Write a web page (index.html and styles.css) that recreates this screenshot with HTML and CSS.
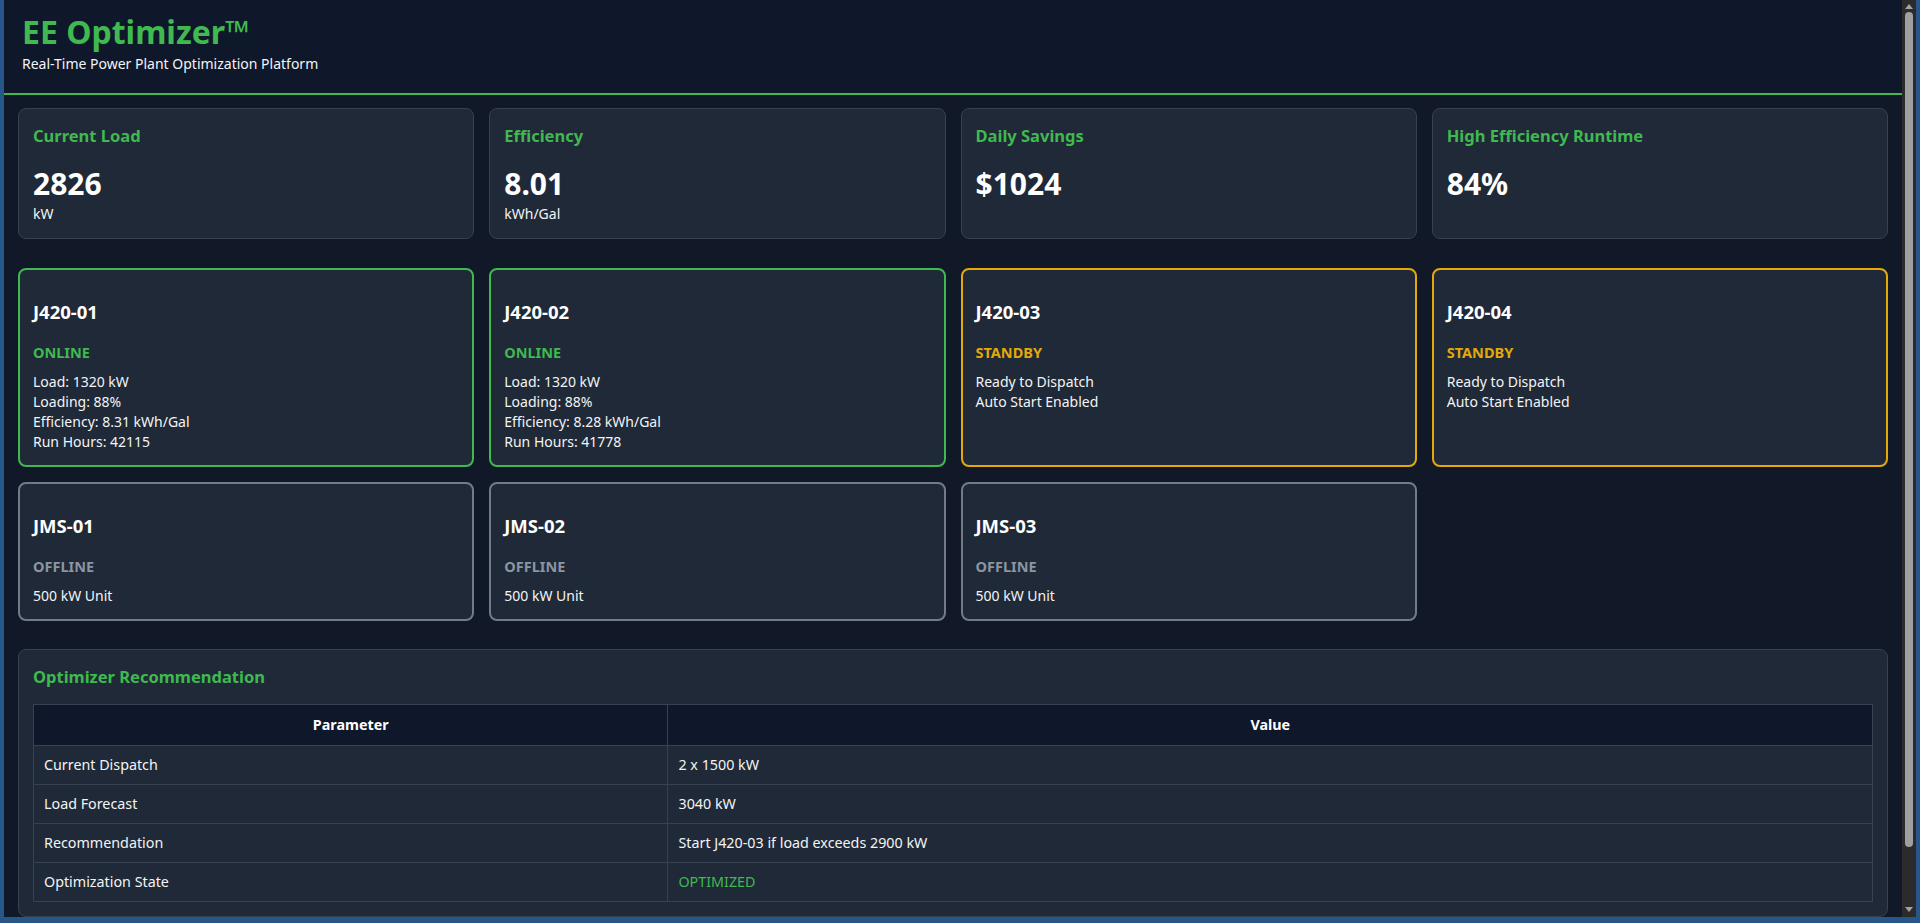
FILE: index.html
```html
<!DOCTYPE html>
<html lang="en">
<head>
<meta charset="utf-8">
<title>EE Optimizer</title>
<link rel="stylesheet" href="styles.css">
</head>
<body>
<div class="window">
  <div class="viewport">
    <header class="header">
      <h1 class="title">EE Optimizer™</h1>
      <p class="subtitle">Real-Time Power Plant Optimization Platform</p>
    </header>
    <main class="main">
      <section class="stats">
        <div class="stat-card">
          <h3 class="stat-label">Current Load</h3>
          <div class="stat-value">2826</div>
          <div class="stat-unit">kW</div>
        </div>
        <div class="stat-card">
          <h3 class="stat-label">Efficiency</h3>
          <div class="stat-value">8.01</div>
          <div class="stat-unit">kWh/Gal</div>
        </div>
        <div class="stat-card">
          <h3 class="stat-label">Daily Savings</h3>
          <div class="stat-value">$1024</div>
        </div>
        <div class="stat-card">
          <h3 class="stat-label">High Efficiency Runtime</h3>
          <div class="stat-value">84%</div>
        </div>
      </section>

      <section class="units">
        <div class="unit-card online">
          <h3 class="unit-name">J420-01</h3>
          <div class="unit-status">ONLINE</div>
          <div class="unit-line">Load: 1320 kW</div>
          <div class="unit-line">Loading: 88%</div>
          <div class="unit-line">Efficiency: 8.31 kWh/Gal</div>
          <div class="unit-line">Run Hours: 42115</div>
        </div>
        <div class="unit-card online">
          <h3 class="unit-name">J420-02</h3>
          <div class="unit-status">ONLINE</div>
          <div class="unit-line">Load: 1320 kW</div>
          <div class="unit-line">Loading: 88%</div>
          <div class="unit-line">Efficiency: 8.28 kWh/Gal</div>
          <div class="unit-line">Run Hours: 41778</div>
        </div>
        <div class="unit-card standby">
          <h3 class="unit-name">J420-03</h3>
          <div class="unit-status">STANDBY</div>
          <div class="unit-line">Ready to Dispatch</div>
          <div class="unit-line">Auto Start Enabled</div>
        </div>
        <div class="unit-card standby">
          <h3 class="unit-name">J420-04</h3>
          <div class="unit-status">STANDBY</div>
          <div class="unit-line">Ready to Dispatch</div>
          <div class="unit-line">Auto Start Enabled</div>
        </div>
        <div class="unit-card offline">
          <h3 class="unit-name">JMS-01</h3>
          <div class="unit-status">OFFLINE</div>
          <div class="unit-line">500 kW Unit</div>
        </div>
        <div class="unit-card offline">
          <h3 class="unit-name">JMS-02</h3>
          <div class="unit-status">OFFLINE</div>
          <div class="unit-line">500 kW Unit</div>
        </div>
        <div class="unit-card offline">
          <h3 class="unit-name">JMS-03</h3>
          <div class="unit-status">OFFLINE</div>
          <div class="unit-line">500 kW Unit</div>
        </div>
      </section>

      <section class="panel">
        <h2 class="panel-title">Optimizer Recommendation</h2>
        <table class="rec-table">
          <thead>
            <tr><th class="col-param">Parameter</th><th>Value</th></tr>
          </thead>
          <tbody>
            <tr><td>Current Dispatch</td><td>2 x 1500 kW</td></tr>
            <tr><td>Load Forecast</td><td>3040 kW</td></tr>
            <tr><td>Recommendation</td><td>Start J420-03 if load exceeds 2900 kW</td></tr>
            <tr><td>Optimization State</td><td class="ok">OPTIMIZED</td></tr>
          </tbody>
        </table>
      </section>
    </main>
  </div>
  <div class="scrollbar" aria-hidden="true">
    <span class="sb-arrow sb-up"></span>
    <div class="sb-track"><div class="sb-thumb"></div></div>
    <span class="sb-arrow sb-down"></span>
  </div>
</div>
</body>
</html>
```

FILE: styles.css
```css
html, body {
  margin: 0;
  padding: 0;
}

body {
  background: #27568b;
  font-family: "Noto Sans", "Segoe UI", sans-serif;
  color: #e5e7eb;
  font-size: 14px;
}

.window {
  margin: 0 4px;
  height: 917px;
  display: flex;
  background: #111827;
}

.viewport {
  flex: 1;
  min-width: 0;
  overflow: hidden;
}

/* Fake scrollbar (headless browsers hide real ones) */
.scrollbar {
  width: 14px;
  flex: none;
  background: #2b2b2b;
  display: flex;
  flex-direction: column;
  align-items: center;
}

.sb-arrow {
  flex: none;
  width: 0;
  height: 0;
  border-left: 4px solid transparent;
  border-right: 4px solid transparent;
}

.sb-up {
  margin: 4px 0 3px;
  border-bottom: 5px solid #a3a3a3;
}

.sb-down {
  margin: 3px 0 5px;
  border-top: 5px solid #a3a3a3;
}

.sb-track {
  flex: 1;
  width: 100%;
  display: flex;
  justify-content: center;
}

.sb-thumb {
  width: 8px;
  height: 93.6%;
  background: #9f9f9f;
  border-radius: 4px;
}

/* Header */
.header {
  background: #0f172a;
  padding: 12px 18px 19px;
  border-bottom: 2px solid #3fb950;
  height: 62px;
}

.title {
  margin: 0;
  font-size: 32px;
  line-height: 40px;
  font-weight: 700;
  color: #3fb950;
}

.subtitle {
  margin: 2px 0 0;
  font-size: 14px;
  line-height: 20px;
  color: #f3f4f6;
}

/* Main */
.main {
  padding: 13px 14px 62px;
}

.stats {
  display: grid;
  grid-template-columns: repeat(4, 1fr);
  gap: 15px;
}

.stat-card {
  background: #1f2937;
  border: 1px solid #374151;
  border-radius: 8px;
  padding: 14px;
}

.stat-label {
  margin: 0 0 16px;
  font-size: 16.5px;
  line-height: 25px;
  font-weight: 700;
  color: #3fb950;
}

.stat-value {
  font-size: 30px;
  line-height: 40px;
  font-weight: 700;
  color: #ffffff;
}

.stat-unit {
  font-size: 14px;
  line-height: 20px;
  color: #f3f4f6;
}

/* Units */
.units {
  margin-top: 29px;
  display: grid;
  grid-template-columns: repeat(4, 1fr);
  gap: 15px;
}

.unit-card {
  background: #1f2937;
  border: 2px solid #6b7280;
  border-radius: 8px;
  padding: 13px;
}

.unit-card.online { border-color: #3fb950; }
.unit-card.standby { border-color: #e3a90b; }
.unit-card.offline { border-color: #737b88; }

.unit-name {
  margin: 17px 0 18px;
  font-size: 18.5px;
  line-height: 24px;
  font-weight: 700;
  color: #ffffff;
}

.unit-status {
  margin-bottom: 10px;
  font-size: 14.5px;
  line-height: 20px;
  font-weight: 700;
}

.online .unit-status { color: #3fb950; }
.standby .unit-status { color: #e3a90b; }
.offline .unit-status { color: #8b95a3; }

.unit-line {
  font-size: 14px;
  line-height: 20px;
  color: #f3f4f6;
}

/* Panel */
.panel {
  margin-top: 28px;
  background: #1f2937;
  border: 1px solid #374151;
  border-radius: 8px;
  padding: 14px;
}

.panel-title {
  margin: 0 0 15px;
  font-size: 16.5px;
  line-height: 25px;
  font-weight: 700;
  color: #3fb950;
}

.rec-table {
  width: 100%;
  border-collapse: collapse;
  font-size: 14.3px;
  line-height: 20px;
}

.rec-table th,
.rec-table td {
  border: 1px solid #374151;
  padding: 9px 10px;
  text-align: left;
  color: #f3f4f6;
}

.rec-table th {
  background: #0f172a;
  color: #ffffff;
  font-weight: 700;
  text-align: center;
  padding: 10px;
}

.rec-table .col-param {
  width: 34.5%;
}

.rec-table td.ok {
  color: #3fb950;
}
```
